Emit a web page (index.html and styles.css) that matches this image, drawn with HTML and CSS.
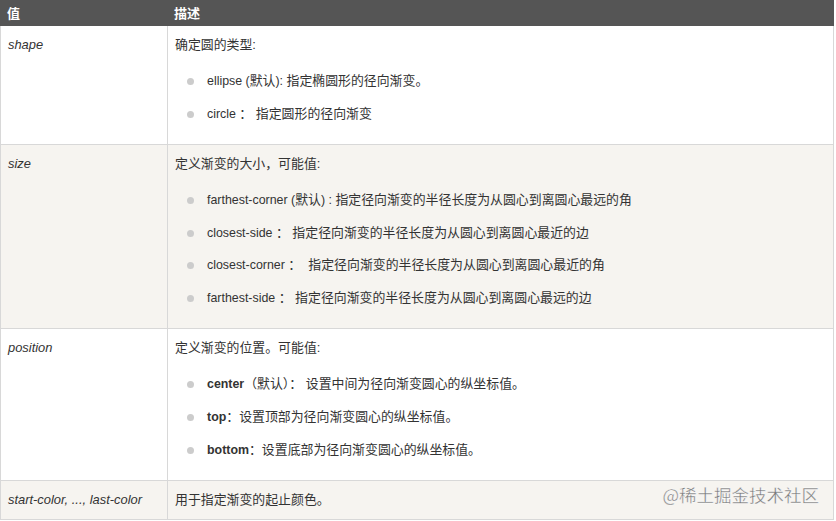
FILE: index.html
```html
<!DOCTYPE html>
<html lang="zh">
<head>
<meta charset="utf-8">
<link rel="stylesheet" href="styles.css">
</head>
<body>
<div class="wrap">
<table class="ref">
  <colgroup><col class="c1"><col class="c2"></colgroup>
  <thead>
    <tr><th>值</th><th>描述</th></tr>
  </thead>
  <tbody>
    <tr>
      <td class="name">shape</td>
      <td>
        <p>确定圆的类型:</p>
        <ul>
          <li><span class="en">ellipse (</span>默认<span class="en">): </span>指定椭圆形的径向渐变。</li>
          <li><span class="en">circle </span>： 指定圆形的径向渐变</li>
        </ul>
      </td>
    </tr>
    <tr class="alt">
      <td class="name">size</td>
      <td>
        <p>定义渐变的大小，可能值:</p>
        <ul>
          <li><span class="en">farthest-corner (</span>默认<span class="en">) : </span>指定径向渐变的半径长度为从圆心到离圆心最远的角</li>
          <li><span class="en">closest-side </span>： 指定径向渐变的半径长度为从圆心到离圆心最近的边</li>
          <li><span class="en">closest-corner </span>：&nbsp; 指定径向渐变的半径长度为从圆心到离圆心最近的角</li>
          <li><span class="en">farthest-side </span>： 指定径向渐变的半径长度为从圆心到离圆心最远的边</li>
        </ul>
      </td>
    </tr>
    <tr>
      <td class="name">position</td>
      <td>
        <p>定义渐变的位置。可能值:</p>
        <ul>
          <li><b class="en">center</b>（默认）： 设置中间为径向渐变圆心的纵坐标值。</li>
          <li><b class="en">top</b>：设置顶部为径向渐变圆心的纵坐标值。</li>
          <li><b class="en">bottom</b>：设置底部为径向渐变圆心的纵坐标值。</li>
        </ul>
      </td>
    </tr>
    <tr class="alt">
      <td class="name">start-color, ..., last-color</td>
      <td><p>用于指定渐变的起止颜色。</p></td>
    </tr>
  </tbody>
</table>
<div class="watermark">@稀土掘金技术社区</div>
</div>
</body>
</html>
```
FILE: styles.css
```css
html, body {
  margin: 0;
  padding: 0;
  background: #ffffff;
}
body {
  font-family: "Liberation Sans", Arial, "Noto Sans CJK SC", sans-serif;
  font-size: 12.9px;
  color: #333333;
  overflow: hidden;
}
.wrap {
  position: relative;
  width: 836px;
  height: 521px;
  overflow: hidden;
}
.ref {
  width: 834px;
  border-collapse: collapse;
  table-layout: fixed;
}
.c1 { width: 167px; }
.ref th {
  background: #555555;
  color: #ffffff;
  font-weight: bold;
  font-size: 13px;
  text-align: left;
  line-height: 17px;
  padding: 4px 5px 3px 6px;
  border: 1px solid #555555;
}
.ref td {
  vertical-align: top;
  padding: 10px 7px 10px 7px;
  border: 1px solid #d8d8d8;
  line-height: 18px;
}
.ref td.name {
  font-style: italic;
}
.ref tr.alt td {
  background: #f6f4f0;
}
.ref p {
  margin: 0;
}
.ref .en {
  font-size: 12.4px;
}
.ref ul {
  list-style: none;
  margin: 18px 0 11px 0;
  padding: 0;
}
.ref li {
  position: relative;
  padding-left: 32px;
}
.ref li + li {
  margin-top: 14.8px;
}
.ref li::before {
  content: "";
  position: absolute;
  left: 12px;
  top: 6px;
  width: 7px;
  height: 7px;
  border-radius: 50%;
  background: #cccccc;
}
.watermark {
  position: absolute;
  right: 17px;
  bottom: 16px;
  font-family: "Noto Sans CJK SC", sans-serif;
  font-size: 17.5px;
  line-height: 20px;
  color: #7a7a7a;
  -webkit-text-stroke: 0.3px #ffffff;
  text-shadow: 0 0 1px #ffffff;
}
```
